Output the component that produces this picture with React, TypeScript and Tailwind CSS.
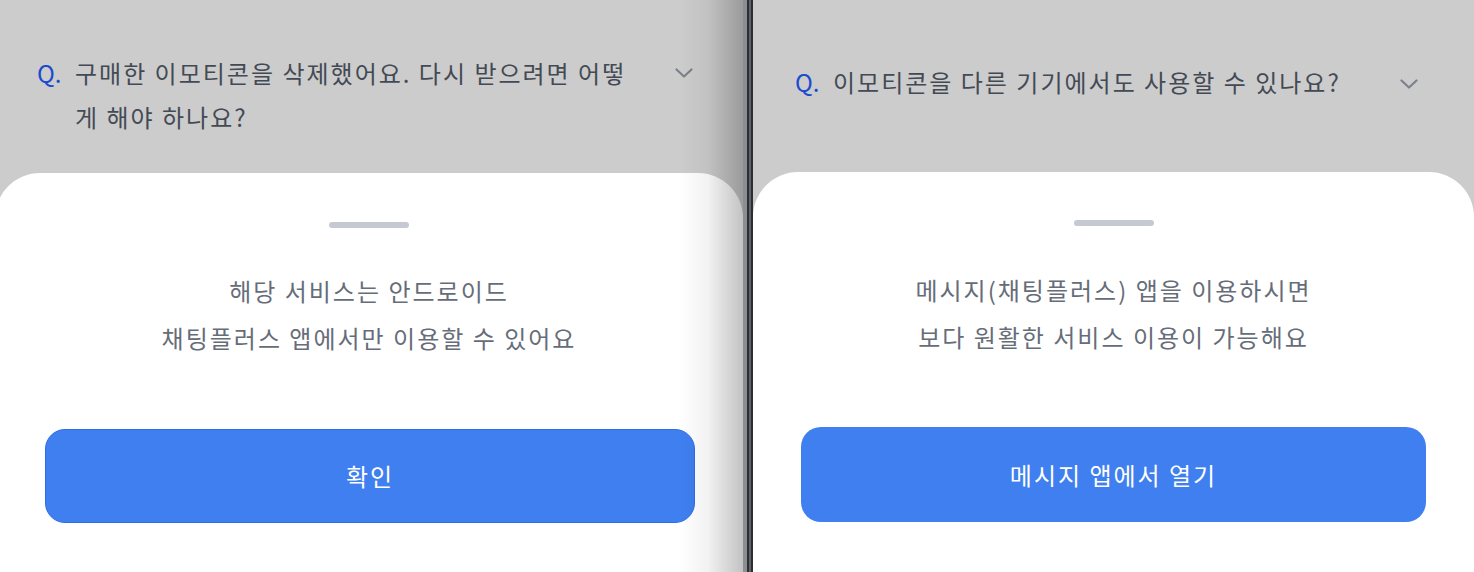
import React from "react";

const font = { fontFamily: '"Noto Sans CJK KR", "Noto Sans", sans-serif' };

function Chevron() {
  return (
    <svg width="18" height="10" viewBox="0 0 18 10" fill="none">
      <path d="M1.5 1.5L9 8.5L16.5 1.5" stroke="#7c818a" strokeWidth="2.2" strokeLinecap="round" strokeLinejoin="round" />
    </svg>
  );
}

function Handle() {
  return <div className="mx-auto h-[6px] w-[80px] rounded-full bg-[#c5c9d1]" />;
}

function LeftPhone() {
  return (
    <div className="relative flex h-full w-[743px] shrink-0 flex-col overflow-hidden bg-[#cccccc]">
      {/* question */}
      <div className="flex h-[173px] items-start pl-[37px] pr-[50px] pt-[51px]">
        <span className="w-[38px] shrink-0 text-[24px] leading-[44px] text-[#1a4bcf]">Q.</span>
        <p className="flex-1 whitespace-nowrap text-[24px] leading-[44px] tracking-[2px] text-[#434a54]">
          구매한 이모티콘을 삭제했어요. 다시 받으려면 어떻
          <br />
          게 해야 하나요?
        </p>
        <div className="ml-4 flex h-[44px] items-center">
          <Chevron />
        </div>
      </div>

      {/* bottom sheet */}
      <div className="-ml-[5px] flex flex-1 flex-col rounded-t-[45px] bg-white pt-[49px]">
        <Handle />
        <p className="mt-[39px] text-center text-[24px] leading-[47px] tracking-[2px] text-[#666d79]">
          해당 서비스는 안드로이드
          <br />
          채팅플러스 앱에서만 이용할 수 있어요
        </p>
        <div className="mt-[68px] pl-[50px] pr-[48px]">
          <button className="flex h-[94px] w-full items-center justify-center rounded-[20px] border border-[#2d6ee8] bg-[#3f7ff0] text-[24px] tracking-[2px] text-white">
            확인
          </button>
        </div>
      </div>

      {/* curved screen edge shade */}
      <div className="pointer-events-none absolute right-0 top-0 h-full w-[64px] bg-[linear-gradient(to_right,transparent,rgba(0,0,0,0.05)_45%,rgba(0,0,0,0.24))]" />
    </div>
  );
}

function RightPhone() {
  return (
    <div className="flex h-full flex-1 flex-col overflow-hidden bg-[#cccccc]">
      <div className="flex h-[172px] items-start pl-[42px] pr-[56px] pt-[60px]">
        <span className="w-[38px] shrink-0 text-[24px] leading-[44px] text-[#1a4bcf]">Q.</span>
        <p className="flex-1 whitespace-nowrap text-[24px] leading-[44px] tracking-[2px] text-[#434a54]">
          이모티콘을 다른 기기에서도 사용할 수 있나요?
        </p>
        <div className="ml-4 flex h-[44px] items-center pt-[4px]">
          <Chevron />
        </div>
      </div>

      <div className="flex flex-1 flex-col rounded-t-[45px] bg-white pt-[48px]">
        <Handle />
        <p className="mt-[40px] text-center text-[24px] leading-[47px] tracking-[2px] text-[#666d79]">
          메시지(채팅플러스) 앱을 이용하시면
          <br />
          보다 원활한 서비스 이용이 가능해요
        </p>
        <div className="mt-[67px] px-[48px]">
          <button className="flex h-[95px] w-full items-center justify-center rounded-[20px] bg-[#3f7ff0] text-[24px] tracking-[2px] text-white">
            메시지 앱에서 열기
          </button>
        </div>
      </div>
    </div>
  );
}

export default function App() {
  return (
    <div className="flex h-[572px] w-[1474px] overflow-hidden bg-white" style={font}>
      <LeftPhone />
      <div className="flex h-full shrink-0">
        <div className="w-[4px] bg-[#8b8e92]" />
        <div className="w-[2px] bg-[#2c2f34]" />
        <div className="w-[2px] bg-[#5e6166]" />
        <div className="w-[2px] bg-[#2b2e33]" />
      </div>
      <RightPhone />
    </div>
  );
}
